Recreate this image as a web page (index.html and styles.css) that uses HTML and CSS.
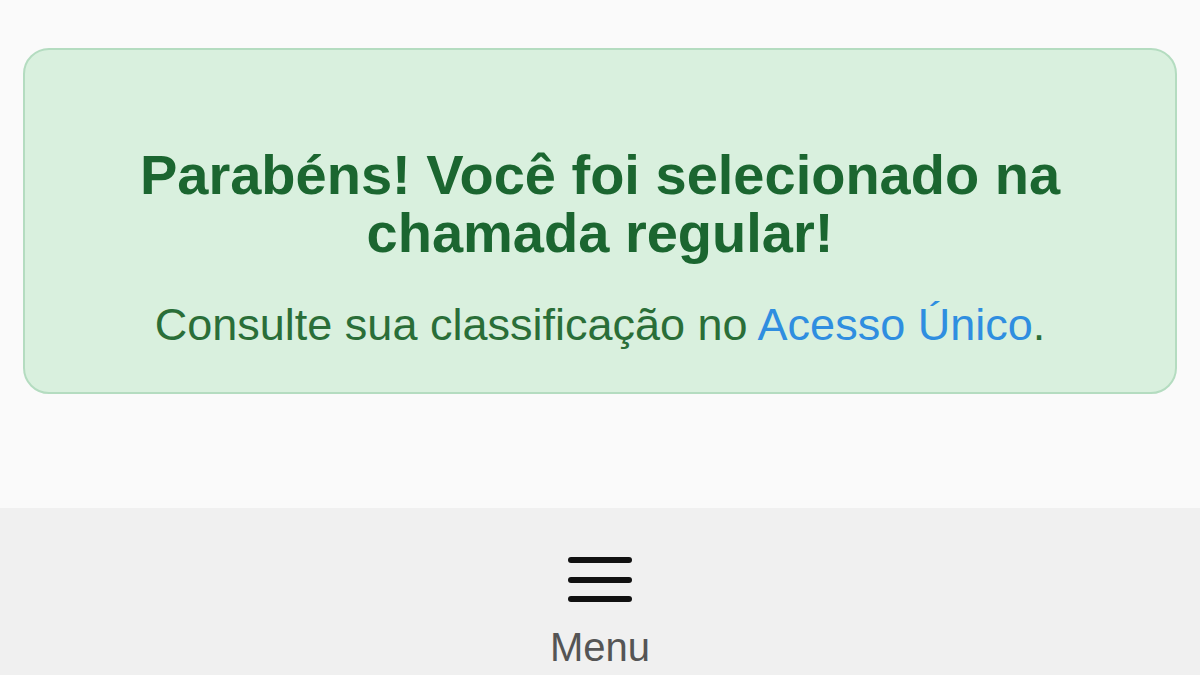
FILE: index.html
```html
<!DOCTYPE html>
<html lang="pt-BR">
<head>
    <meta charset="UTF-8">
    <meta name="viewport" content="width=device-width, initial-scale=1.0">
    <title>Resultado</title>
    <link rel="stylesheet" href="styles.css">
</head>
<body>
    <main class="content">
        <div class="alert-success">
            <h2 class="alert-title">Parabéns! Você foi selecionado na<br>chamada regular!</h2>
            <p class="alert-text">Consulte sua classificação no <a href="#">Acesso Único</a>.</p>
        </div>
    </main>
    <nav class="bottom-bar">
        <button class="menu-btn">
            <svg class="menu-icon" width="66" height="50" viewBox="0 0 66 50">
                <line x1="4" y1="5" x2="62" y2="5" />
                <line x1="4" y1="25" x2="62" y2="25" />
                <line x1="4" y1="44" x2="62" y2="44" />
            </svg>
            <span class="menu-label">Menu</span>
        </button>
    </nav>
</body>
</html>
```

FILE: styles.css
```css
html, body {
    margin: 0;
    height: 100%;
}
body {
    background-color: #fafafa;
    font-family: "Liberation Sans", Arial, sans-serif;
    display: flex;
    flex-direction: column;
    overflow: hidden;
}
.content {
    padding: 48px 23px 0 23px;
    height: 508px;
    box-sizing: border-box;
}
.alert-success {
    background-color: #d9f0de;
    border: 2px solid #b4dcc0;
    border-radius: 26px;
    height: 346px;
    box-sizing: border-box;
    display: flex;
    flex-direction: column;
    align-items: center;
    text-align: center;
    padding-top: 96px;
}
.alert-title {
    color: #1b6630;
    font-size: 56px;
    font-weight: bold;
    line-height: 58px;
    margin: 0;
}
.alert-text {
    color: #2a6e38;
    font-size: 45px;
    margin: 37px 0 0 0;
}
.alert-text a {
    color: #2f8ee0;
    text-decoration: none;
}
.bottom-bar {
    background-color: #f0f0f0;
    flex: 1;
    display: flex;
    justify-content: center;
    padding-top: 47px;
}
.menu-btn {
    background: none;
    border: none;
    padding: 0;
    display: flex;
    flex-direction: column;
    align-items: center;
    font-family: inherit;
    cursor: pointer;
    height: 120px;
}
.menu-icon line {
    stroke: #111111;
    stroke-width: 6;
    stroke-linecap: round;
}
.menu-label {
    color: #555555;
    font-size: 40px;
    margin-top: 20px;
}
```
